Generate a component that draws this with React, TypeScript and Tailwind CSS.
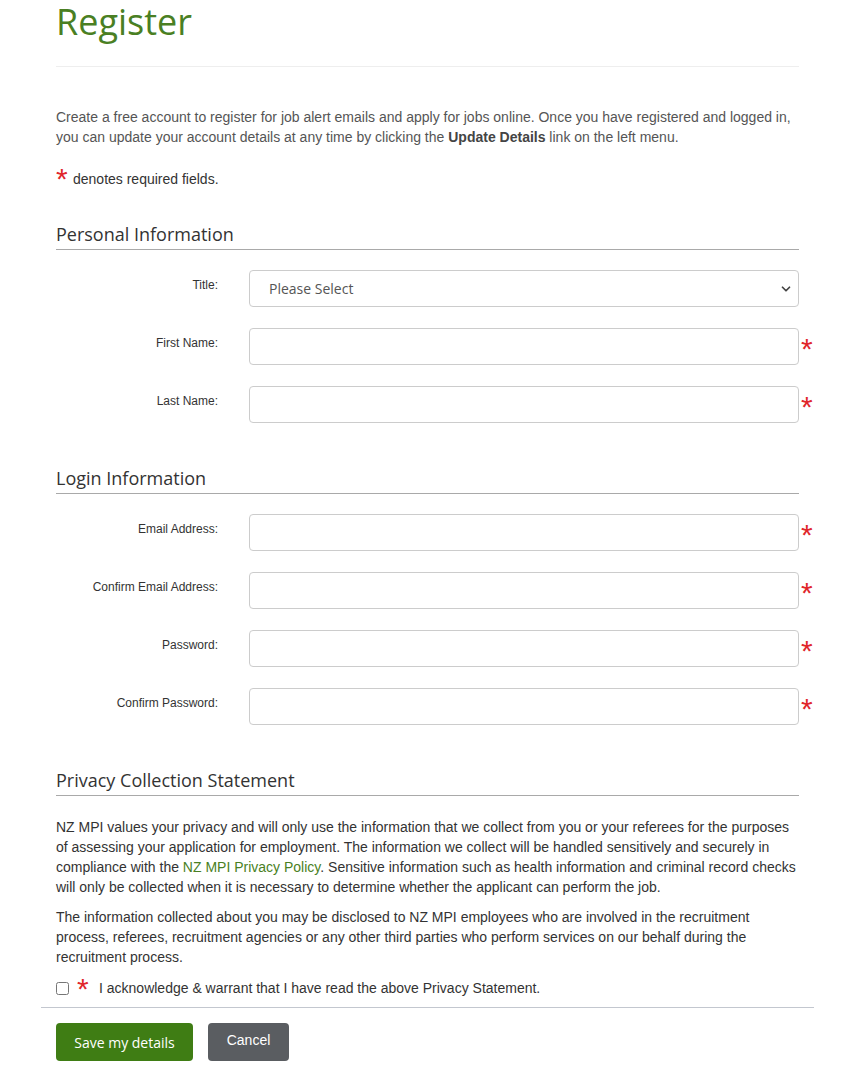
import { ChevronDown } from 'lucide-react';

const PERSONAL = [
  { label: 'First Name:', type: 'text' },
  { label: 'Last Name:', type: 'text' },
];

const LOGIN = [
  { label: 'Email Address:', type: 'email' },
  { label: 'Confirm Email Address:', type: 'email' },
  { label: 'Password:', type: 'password' },
  { label: 'Confirm Password:', type: 'password' },
];

const arial = "font-['Liberation_Sans',Arial,sans-serif]";
const open = "font-['Open_Sans',sans-serif]";

function Req({ className = '' }: { className?: string }) {
  return <span className={`${arial} text-[#e0262b] text-[30px] leading-none ${className}`}>*</span>;
}

function SectionTitle({ children }: { children: string }) {
  return (
    <h2 className={`${open} text-[18px] leading-[20px] text-[#333] pb-[5px] border-b border-[#a9a9a9]`}>
      {children}
    </h2>
  );
}

function Row({ label, type, required = true }: { label: string; type: string; required?: boolean }) {
  return (
    <div className="flex gap-[31px]">
      <label className={`${arial} w-[162px] shrink-0 text-right text-[12px] leading-[14px] text-[#333] pt-[8px]`}>{label}</label>
      <div className="relative w-[550px]">
        <input
          type={type}
          className="block w-full h-[37px] rounded-[4px] border border-[#ccc] bg-white px-3 outline-none"
        />
        {required && <Req className="absolute left-full top-[6px] ml-[2px]" />}
      </div>
    </div>
  );
}

export default function App() {
  return (
    <div className={`${arial} bg-white min-h-[1091px] w-[848px]`}>
      <div className="pl-[56px] w-[799px]">
        <h1 className={`${open} text-[36px] leading-[40px] text-[#4a7f23] pt-[2px]`}>Register</h1>
        <div className="mt-[24px] border-t border-[#eee]" />

        <p className="mt-[40px] text-[14px] leading-[20px] text-[#555]">
          Create a free account to register for job alert emails and apply for jobs online. Once you have registered and logged in,
          you can update your account details at any time by clicking the <b className="text-[#444]">Update Details</b> link on the left menu.
        </p>
        <p className="mt-[22px] h-[20px] text-[14px] leading-[20px] text-[#333] flex items-start">
          <span className="h-[20px] w-[11px] mr-[6px] overflow-visible">
            <Req className="relative -top-[5px] block" />
          </span>
          <span>denotes required fields.</span>
        </p>

        <div className="mt-[35px]">
          <SectionTitle>Personal Information</SectionTitle>
          <div className="mt-[20px] flex flex-col gap-[21px]">
            <div className="flex gap-[31px]">
              <label className={`${arial} w-[162px] shrink-0 text-right text-[12px] leading-[14px] text-[#333] pt-[8px]`}>Title:</label>
              <div className="relative w-[550px]">
                <select
                  defaultValue=""
                  className={`${open} block w-full h-[37px] appearance-none rounded-[4px] border border-[#ccc] bg-white pl-[19px] text-[14px] text-[#555] outline-none`}
                >
                  <option value="">Please Select</option>
                  <option>Mr</option>
                  <option>Mrs</option>
                  <option>Ms</option>
                  <option>Miss</option>
                  <option>Dr</option>
                </select>
                <ChevronDown size={14} strokeWidth={3} className="absolute right-[6px] top-[12px] text-[#444] pointer-events-none" />
              </div>
            </div>
            {PERSONAL.map(f => <Row key={f.label} label={f.label} type={f.type} />)}
          </div>
        </div>

        <div className="mt-[45px]">
          <SectionTitle>Login Information</SectionTitle>
          <div className="mt-[20px] flex flex-col gap-[21px]">
            {LOGIN.map(f => <Row key={f.label} label={f.label} type={f.type} />)}
          </div>
        </div>

        <div className="mt-[45px]">
          <SectionTitle>Privacy Collection Statement</SectionTitle>
          <p className="mt-[21px] text-[14px] leading-[20px] text-[#333]">
            NZ MPI values your privacy and will only use the information that we collect from you or your referees for the purposes
            of assessing your application for employment. The information we collect will be handled sensitively and securely in
            compliance with the <a href="#" className="text-[#4a7f23]">NZ MPI Privacy Policy</a>. Sensitive information such as health information and criminal record checks
            will only be collected when it is necessary to determine whether the applicant can perform the job.
          </p>
          <p className="mt-[10px] text-[14px] leading-[20px] text-[#333]">
            The information collected about you may be disclosed to NZ MPI employees who are involved in the recruitment
            process, referees, recruitment agencies or any other third parties who perform services on our behalf during the
            recruitment process.
          </p>
          <label className="mt-[11px] h-[20px] flex items-center text-[14px] leading-[20px] text-[#333]">
            <input type="checkbox" className="w-[13px] h-[13px] m-0" />
            <span className="h-[20px] w-[11px] ml-[8px] mr-[11px] overflow-visible">
              <Req className="relative -top-[4px] block" />
            </span>
            <span>I acknowledge &amp; warrant that I have read the above Privacy Statement.</span>
          </label>
        </div>
      </div>

      <div className="ml-[41px] w-[773px] mt-[9px] border-t border-[#c3c7cf]" />

      <div className="pl-[56px] mt-[15px] flex gap-[15px]">
        <button className={`${open} h-[38px] w-[137px] rounded-[4px] bg-[#3f7d14] text-white text-[14px]`}>Save my details</button>
        <button className={`${arial} h-[38px] w-[81px] rounded-[4px] bg-[#5a5d61] text-white text-[14px] pb-[3px]`}>Cancel</button>
      </div>
    </div>
  );
}
